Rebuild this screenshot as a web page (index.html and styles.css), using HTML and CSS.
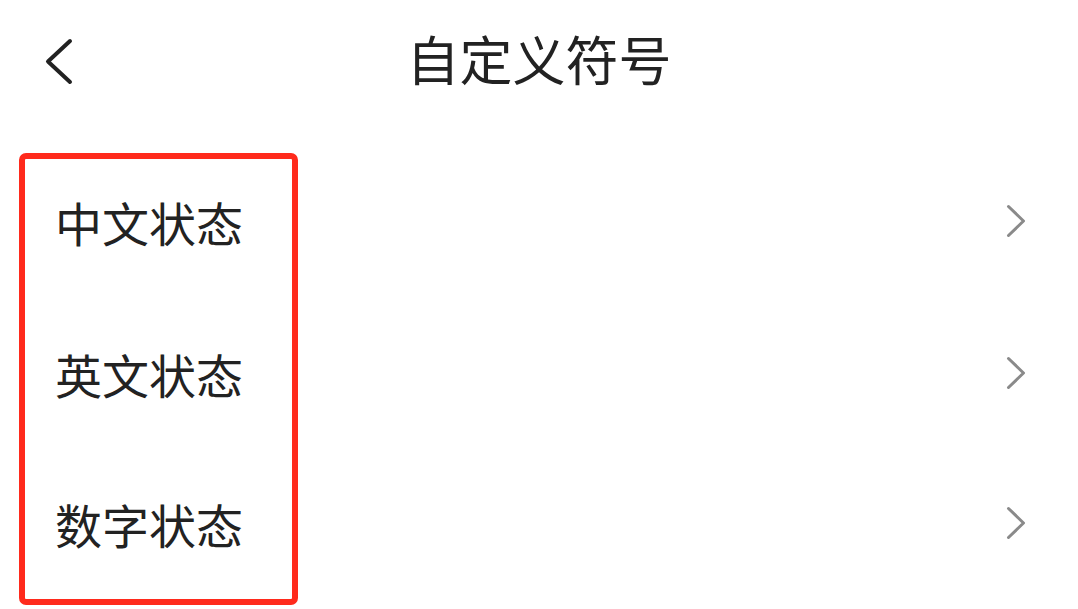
FILE: index.html
```html
<!DOCTYPE html>
<html lang="zh-CN">
<head>
<meta charset="utf-8">
<title>自定义符号</title>
<link rel="stylesheet" href="styles.css">
</head>
<body>
<div class="page">
  <header class="topbar">
    <div class="back">
      <svg width="30" height="49" viewBox="0 0 30 49"><path d="M26 4 L4 24.5 L26 45" fill="none" stroke="#222" stroke-width="4" stroke-linecap="round" stroke-linejoin="round"/></svg>
    </div>
    <h1 class="title">自定义符号</h1>
    <div class="spacer"></div>
  </header>
  <ul class="list">
    <li class="row"><span class="label">中文状态</span><svg class="arrow" width="22" height="34" viewBox="0 0 22 34"><path d="M3.5 2.5 L18.5 17 L3.5 31.5" fill="none" stroke="#8a8a8a" stroke-width="3" stroke-linecap="round" stroke-linejoin="round"/></svg></li>
    <li class="row"><span class="label">英文状态</span><svg class="arrow" width="22" height="34" viewBox="0 0 22 34"><path d="M3.5 2.5 L18.5 17 L3.5 31.5" fill="none" stroke="#8a8a8a" stroke-width="3" stroke-linecap="round" stroke-linejoin="round"/></svg></li>
    <li class="row"><span class="label">数字状态</span><svg class="arrow" width="22" height="34" viewBox="0 0 22 34"><path d="M3.5 2.5 L18.5 17 L3.5 31.5" fill="none" stroke="#8a8a8a" stroke-width="3" stroke-linecap="round" stroke-linejoin="round"/></svg></li>
  </ul>
  <div class="highlight"></div>
</div>
</body>
</html>
```
FILE: styles.css
```css
html, body {
  margin: 0;
  padding: 0;
  background: #ffffff;
}
body {
  font-family: "Noto Sans CJK SC", "Noto Sans", sans-serif;
  color: #222222;
}
.page {
  position: relative;
  width: 1078px;
  height: 609px;
  overflow: hidden;
}
.topbar {
  display: grid;
  grid-template-columns: 1fr auto 1fr;
  align-items: center;
  height: 122px;
}
.back {
  display: flex;
  align-items: center;
  padding-left: 44px;
}
.back svg {
  display: block;
}
.title {
  margin: 0;
  padding-bottom: 5px;
  font-size: 53px;
  font-weight: 400;
  line-height: 1;
  color: #222;
}
.list {
  list-style: none;
  margin: 0;
  padding: 22px 0 0 0;
}
.row {
  display: flex;
  align-items: center;
  justify-content: space-between;
  height: 150px;
  padding: 0 51px 0 55px;
}
.row:first-child {
  height: 154px;
}
.label {
  font-size: 47px;
  line-height: 1;
  color: #222;
}
.arrow {
  display: block;
}
.highlight {
  position: absolute;
  left: 19px;
  top: 153px;
  width: 267px;
  height: 440px;
  border: 6px solid #ff2a1c;
  border-radius: 7px;
}
```
